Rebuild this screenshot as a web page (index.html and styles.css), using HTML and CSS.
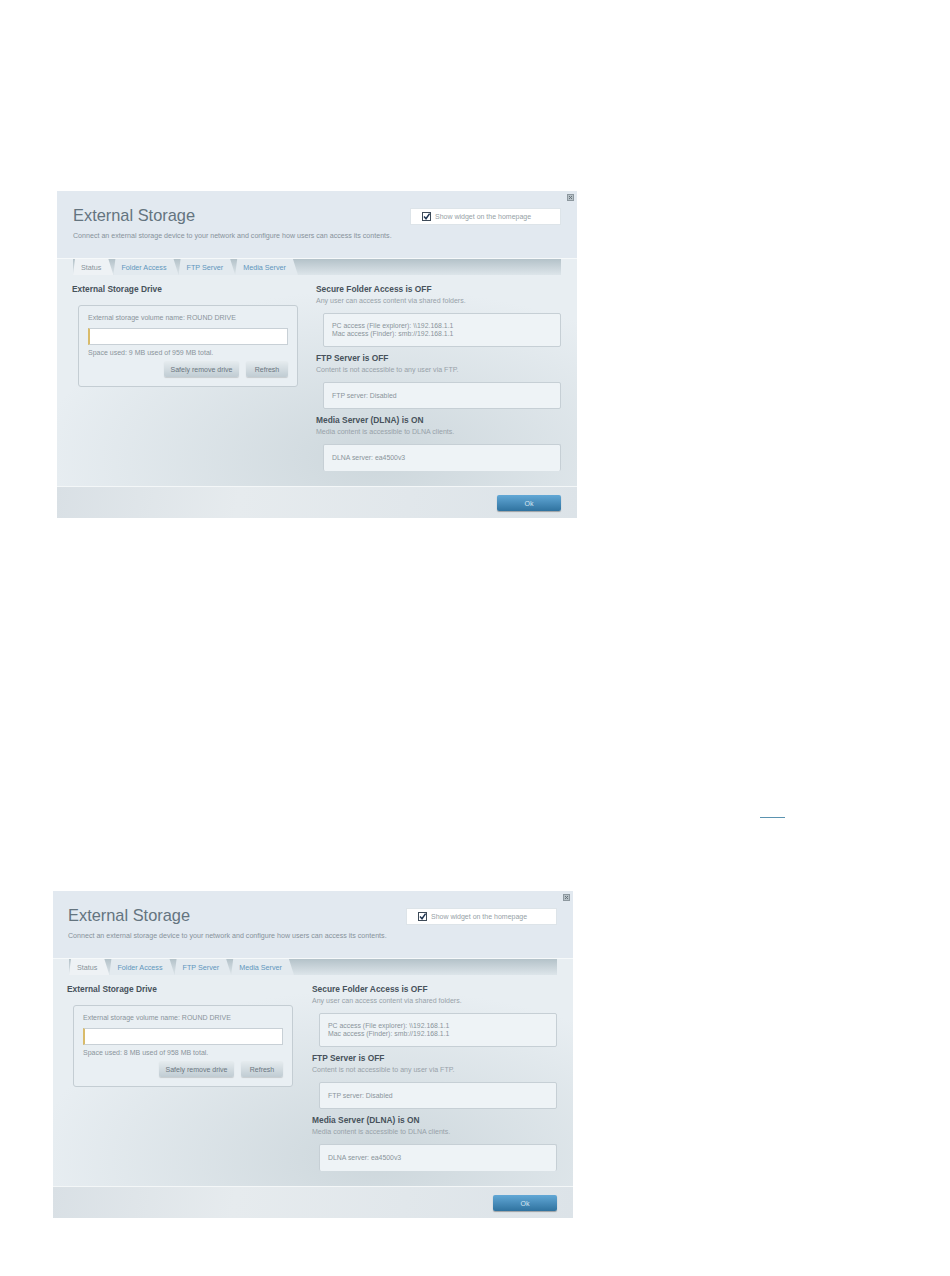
FILE: index.html
```html
<!DOCTYPE html>
<html lang="en">
<head>
  <meta charset="UTF-8" />
  <title>External Storage</title>
  <link rel="stylesheet" href="styles.css">
</head>
<body>
  <!-- First widget -->
  <section class="panel panel-first">
    <span class="close-btn">
      <svg viewBox="0 0 7 7" width="7" height="7"><rect x="0.5" y="0.5" width="6" height="6" fill="#b7c1c7" stroke="#8d989f"/><path d="M2 2l3 3M5 2l-3 3" stroke="#68747c" fill="none"/></svg>
    </span>
    <header class="panel-head">
      <div class="head-row">
        <h1>External Storage</h1>
        <label class="show-widget">
          <svg class="check" viewBox="0 0 9 9" width="9" height="9"><rect x="0.5" y="0.5" width="8" height="8" fill="#fff" stroke="#3d4a58"/><path d="M2 4.5l2 2.2L7.6 1.6" stroke="#1f3552" stroke-width="1.5" fill="none"/></svg>
          Show widget on the homepage
        </label>
      </div>
      <p class="intro">Connect an external storage device to your network and configure how users can access its contents.</p>
    </header>

    <div class="tabs">
      <span class="tab active">Status</span>
      <span class="tab">Folder Access</span>
      <span class="tab">FTP Server</span>
      <span class="tab">Media Server</span>
    </div>

    <div class="panel-body">
      <div class="col-left">
        <h2>External Storage Drive</h2>
        <div class="drive-box">
          <p>External storage volume name: ROUND DRIVE</p>
          <div class="usage-bar"></div>
          <p>Space used: 9 MB used of 959 MB total.</p>
          <div class="drive-actions">
            <button class="btn">Safely remove drive</button>
            <button class="btn btn-refresh">Refresh</button>
          </div>
        </div>
      </div>
      <div class="col-right">
        <h2>Secure Folder Access is OFF</h2>
        <p class="sub">Any user can access content via shared folders.</p>
        <div class="info-box info-tall"><span>PC access (File explorer): \\192.168.1.1<br>Mac access (Finder): smb://192.168.1.1</span></div>
        <h2>FTP Server is OFF</h2>
        <p class="sub">Content is not accessible to any user via FTP.</p>
        <div class="info-box"><span>FTP server: Disabled</span></div>
        <h2>Media Server (DLNA) is ON</h2>
        <p class="sub">Media content is accessible to DLNA clients.</p>
        <div class="info-box info-last"><span>DLNA server: ea4500v3</span></div>
      </div>
    </div>

    <footer class="panel-foot">
      <button class="btn-ok">Ok</button>
    </footer>
  </section>

  <div class="link-rule"></div>

  <!-- Second widget -->
  <section class="panel panel-second">
    <span class="close-btn">
      <svg viewBox="0 0 7 7" width="7" height="7"><rect x="0.5" y="0.5" width="6" height="6" fill="#b7c1c7" stroke="#8d989f"/><path d="M2 2l3 3M5 2l-3 3" stroke="#68747c" fill="none"/></svg>
    </span>
    <header class="panel-head">
      <div class="head-row">
        <h1>External Storage</h1>
        <label class="show-widget">
          <svg class="check" viewBox="0 0 9 9" width="9" height="9"><rect x="0.5" y="0.5" width="8" height="8" fill="#fff" stroke="#3d4a58"/><path d="M2 4.5l2 2.2L7.6 1.6" stroke="#1f3552" stroke-width="1.5" fill="none"/></svg>
          Show widget on the homepage
        </label>
      </div>
      <p class="intro">Connect an external storage device to your network and configure how users can access its contents.</p>
    </header>

    <div class="tabs">
      <span class="tab active">Status</span>
      <span class="tab">Folder Access</span>
      <span class="tab">FTP Server</span>
      <span class="tab">Media Server</span>
    </div>

    <div class="panel-body">
      <div class="col-left">
        <h2>External Storage Drive</h2>
        <div class="drive-box">
          <p>External storage volume name: ROUND DRIVE</p>
          <div class="usage-bar"></div>
          <p>Space used: 8 MB used of 958 MB total.</p>
          <div class="drive-actions">
            <button class="btn">Safely remove drive</button>
            <button class="btn btn-refresh">Refresh</button>
          </div>
        </div>
      </div>
      <div class="col-right">
        <h2>Secure Folder Access is OFF</h2>
        <p class="sub">Any user can access content via shared folders.</p>
        <div class="info-box info-tall"><span>PC access (File explorer): \\192.168.1.1<br>Mac access (Finder): smb://192.168.1.1</span></div>
        <h2>FTP Server is OFF</h2>
        <p class="sub">Content is not accessible to any user via FTP.</p>
        <div class="info-box"><span>FTP server: Disabled</span></div>
        <h2>Media Server (DLNA) is ON</h2>
        <p class="sub">Media content is accessible to DLNA clients.</p>
        <div class="info-box info-last"><span>DLNA server: ea4500v3</span></div>
      </div>
    </div>

    <footer class="panel-foot">
      <button class="btn-ok">Ok</button>
    </footer>
  </section>
</body>
</html>
```

FILE: styles.css
```css
body {
  font-family: "Liberation Sans", Arial, sans-serif;
  margin: 0;
  padding: 0;
  background-color: #fff;
  color: #8a949b;
}

.panel {
  position: relative;
  width: 520px;
  height: 327px;
  display: flex;
  flex-direction: column;
  background-color: #e8eef2;
  background-image: radial-gradient(ellipse 340px 170px at 62% 82%, #cdd7dc 0%, rgba(205, 215, 220, 0) 100%);
}

.panel-first {
  margin: 191px 0 0 57px;
}

.panel-second {
  margin: 0 0 0 53px;
}

.panel-second .panel-head {
  padding-left: 15px;
}

.panel-second .panel-body {
  padding-left: 14px;
  grid-template-columns: 245px 1fr;
}

.link-rule {
  width: 25px;
  height: 1px;
  margin: 299px 0 73px 760px;
  background-color: #5b93b0;
}

.close-btn {
  position: absolute;
  top: 3px;
  right: 3px;
  line-height: 0;
}

/* Header */
.panel-head {
  height: 68px;
  box-sizing: border-box;
  padding: 15px 16px 0;
  background-color: #e2e9f0;
  border-bottom: 1px solid #f6f9fa;
}

.head-row {
  display: flex;
  justify-content: space-between;
  align-items: flex-start;
}

.panel-head h1 {
  margin: 0;
  font-size: 16.4px;
  line-height: 18px;
  font-weight: normal;
  color: #64747f;
}

.show-widget {
  display: flex;
  align-items: center;
  gap: 4px;
  width: 151px;
  height: 17px;
  box-sizing: border-box;
  margin-top: 2px;
  padding-left: 11px;
  background-color: #fff;
  border: 1px solid #dde4e9;
  font-size: 7px;
  color: #969fa6;
}

.check {
  flex: none;
}

.intro {
  margin: 7px 0 0;
  font-size: 7.1px;
  line-height: 9px;
  color: #87929b;
}

/* Tabs */
.tabs {
  display: flex;
  height: 16px;
  margin: 0 16px;
  background: linear-gradient(#b4c2c9, #dde5ea);
}

.tab {
  display: flex;
  align-items: center;
  justify-content: center;
  padding: 0 12px 0 8px;
  font-size: 7.2px;
  color: #6096bd;
  background-color: #e3eaef;
  clip-path: polygon(2px 0, calc(100% - 5px) 0, 100% 100%, 0 100%);
}

.tab.active {
  color: #87929a;
  background-color: #eef2f5;
}

/* Body columns */
.panel-body {
  flex: 1;
  display: grid;
  grid-template-columns: 244px 1fr;
  padding: 0 16px 0 15px;
}

.panel-body h2 {
  margin: 0;
  font-size: 8.4px;
  line-height: 10px;
  font-weight: bold;
  color: #47525b;
}

.col-left {
  padding-top: 9px;
}

.col-right {
  padding-top: 9px;
}

.drive-box {
  width: 220px;
  height: 82px;
  box-sizing: border-box;
  margin: 11px 0 0 6px;
  padding: 7px 9px 0 9px;
  background-color: #e9eff3;
  border: 1px solid #c4cdd3;
  border-radius: 3px;
}

.drive-box p {
  margin: 0;
  font-size: 7px;
  line-height: 9px;
}

.usage-bar {
  height: 17px;
  box-sizing: border-box;
  margin: 6px 0 3px;
  background-color: #fff;
  border: 1px solid #c8d0d6;
  border-left: 2px solid #d9bb6a;
}

.drive-actions {
  display: flex;
  justify-content: flex-end;
  gap: 7px;
  margin-top: 4px;
}

.btn {
  width: 75px;
  height: 16px;
  padding: 0;
  border: none;
  border-radius: 2px;
  background: linear-gradient(#e6ecef, #c0ccd3);
  box-shadow: 0 1px 1px rgba(0, 0, 0, 0.15);
  font-family: inherit;
  font-size: 7px;
  color: #6a7680;
}

.btn-refresh {
  width: 42px;
}

.sub {
  margin: 2px 0 8px;
  font-size: 7.05px;
  line-height: 9px;
  color: #98a2a9;
}

.info-box {
  display: flex;
  align-items: center;
  height: 27px;
  box-sizing: border-box;
  margin: 0 0 6px 7px;
  padding-left: 8px;
  background-color: #eef3f6;
  border: 1px solid #c6cfd5;
  border-radius: 2px;
  font-size: 6.9px;
  line-height: 8px;
}

.info-tall {
  height: 34px;
}

.info-last {
  border-bottom: none;
}

/* Footer */
.panel-foot {
  height: 32px;
  box-sizing: border-box;
  display: flex;
  justify-content: flex-end;
  align-items: flex-start;
  padding: 8px 16px 0 0;
  border-top: 1px solid #f4f7f8;
  background: linear-gradient(100deg, #d9e0e5, #e6ebee 35%, #dce3e8 100%);
}

.btn-ok {
  width: 64px;
  height: 16px;
  padding: 0;
  border: none;
  border-radius: 2px;
  background: linear-gradient(#62a8d6, #2f729f);
  box-shadow: 0 1px 1px rgba(0, 0, 0, 0.3);
  font-family: inherit;
  font-size: 7px;
  color: #d6e6f1;
}
```
